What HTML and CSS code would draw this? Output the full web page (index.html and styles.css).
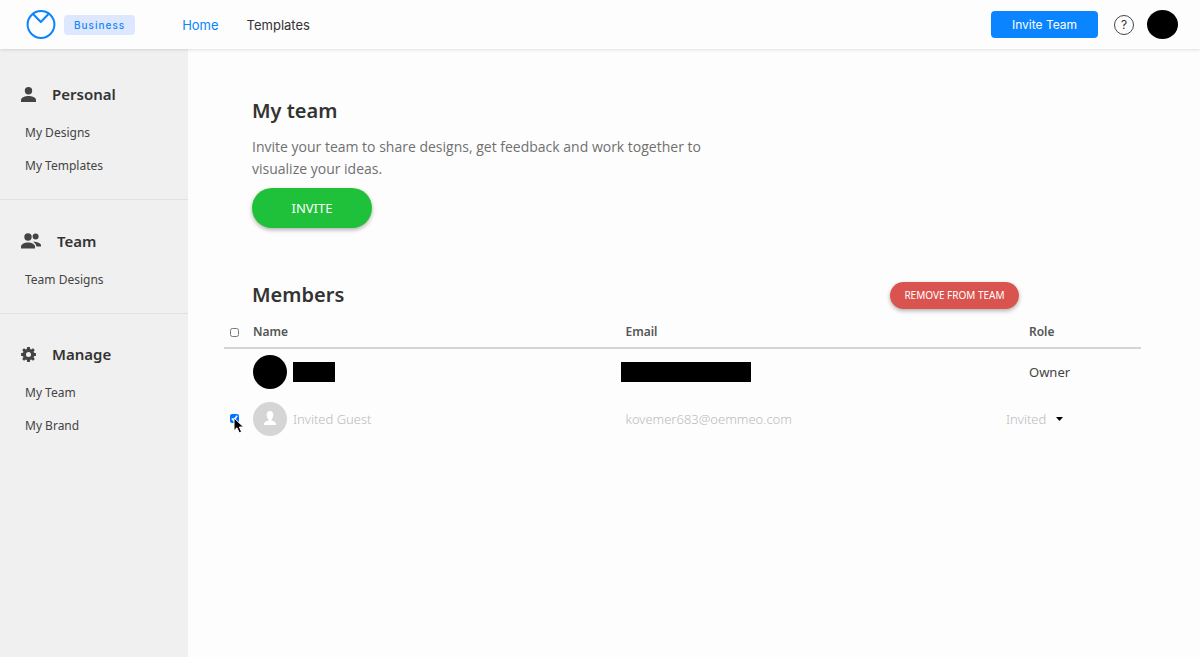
FILE: index.html
```html
<!DOCTYPE html>
<html lang="en">
<head>
	<meta charset="UTF-8">
	<title>My team</title>
	<link rel="stylesheet" href="styles.css">
</head>
<body>
	<header class="topbar">
		<a href="#" class="logo" aria-label="Home page">
			<svg width="30" height="30" viewBox="0 0 30 30" fill="none" stroke="#0a84ff" stroke-width="2" stroke-linejoin="round">
				<circle cx="15" cy="14.500" r="13.4"/>
				<path d="M7 4L14.800 12L22.500 4"/>
			</svg>
		</a>
		<span class="plan">Business</span>
		<nav class="nav">
			<a href="#" class="active">Home</a>
			<a href="#">Templates</a>
		</nav>
		<button type="button" class="btn-team">Invite Team</button>
		<button type="button" class="help" aria-label="Help">?</button>
		<button type="button" class="account" aria-label="Account"></button>
	</header>
	<div class="page">
		<aside class="sidebar">
			<section>
				<h2>
					<svg width="15" height="15" viewBox="0 0 15 15"><circle cx="7.5" cy="3.7" r="3.7"/><path d="M0 15V13C0 10.300 4.500 9 7.500 9S15 10.300 15 13V15Z"/></svg>
					Personal
				</h2>
				<ul>
					<li><a href="#">My Designs</a></li>
					<li><a href="#">My Templates</a></li>
				</ul>
			</section>
			<section>
				<h2>
					<svg width="20" height="16" viewBox="0 0 20 16"><circle cx="7" cy="4" r="3.700"/><circle cx="14.600" cy="3.600" r="3"/><path d="M0 15.500V13.500C0 11 4 9.500 7 9.500S14 11 14 13.500V15.500Z"/><path d="M12 8.700C15.500 8.600 20 10 20 12.300V13.500H15.400C15.200 11.300 14 9.800 12 8.700Z"/></svg>
					Team
				</h2>
				<ul>
					<li><a href="#">Team Designs</a></li>
				</ul>
			</section>
			<section>
				<h2>
					<svg width="15" height="15" viewBox="0 0 16 16"><path fill-rule="evenodd" d="M6.600 0H9.400L9.800 2.200L11 2.700L12.800 1.300L14.700 3.200L13.400 5L13.900 6.200L16 6.600V9.400L13.900 9.800L13.400 11L14.700 12.800L12.800 14.700L11 13.400L9.800 13.900L9.400 16H6.600L6.200 13.900L5 13.400L3.200 14.700L1.300 12.800L2.600 11L2.100 9.800L0 9.400V6.600L2.100 6.200L2.600 5L1.300 3.200L3.200 1.300L5 2.600L6.200 2.100ZM8 5.300A2.700 2.700 0 1 0 8 10.700A2.700 2.700 0 1 0 8 5.300Z"/></svg>
					Manage
				</h2>
				<ul>
					<li><a href="#">My Team</a></li>
					<li><a href="#">My Brand</a></li>
				</ul>
			</section>
		</aside>
		<main class="content">
			<section class="intro">
				<h1>My team</h1>
				<p>Invite your team to share designs, get feedback and work together to visualize your ideas.</p>
				<button type="button" class="btn-invite">INVITE</button>
			</section>
			<div class="members-head">
				<h1>Members</h1>
				<button type="button" class="btn-remove">REMOVE FROM TEAM</button>
			</div>
			<table class="members">
				<thead>
					<tr>
						<th class="col-check"><input type="checkbox" aria-label="Select all members"></th>
						<th>Name</th>
						<th class="col-email">Email</th>
						<th class="col-role">Role</th>
					</tr>
				</thead>
				<tbody>
					<tr>
						<td></td>
						<td><div class="person"><span class="avatar dark"></span><span class="mask mask-name"></span></div></td>
						<td><span class="mask mask-email"></span></td>
						<td class="col-role">Owner</td>
					</tr>
					<tr class="invited">
						<td class="check">
							<input type="checkbox" aria-label="Select Invited Guest" checked>
							<svg class="cursor" width="12" height="18" viewBox="0 0 12 18"><path d="M1 1V13.500L4 10.800L6.200 15.800L8.600 14.800L6.400 10H10.600Z" fill="#000" stroke="#fff"/></svg>
						</td>
						<td>
							<div class="person">
								<span class="avatar"><svg width="14" height="15" viewBox="0 0 14 15" fill="#fff"><path d="M7 0C9.300 0 10.400 1.700 10.300 4C10.200 6 9.500 7.300 8.600 8.200V9.500C10.800 10.200 13 11 13 13V14H1V13C1 11 3.200 10.200 5.400 9.500V8.200C4.500 7.300 3.800 6 3.700 4C3.600 1.700 4.700 0 7 0Z"/></svg></span>
								Invited Guest
							</div>
						</td>
						<td>kovemer683@oemmeo.com</td>
						<td>
							<div class="role-select">
								<select aria-label="Role of Invited Guest"><option>Invited</option></select>
								<svg width="7" height="4" viewBox="0 0 7 4"><path d="M0 0H7L3.500 4Z"/></svg>
							</div>
						</td>
					</tr>
				</tbody>
			</table>
		</main>
	</div>
</body>
</html>
```
FILE: styles.css
```css
*{box-sizing: border-box;}
body,h1,h2,p,ul{margin: 0;padding: 0;}
body{display: flex;flex-direction: column;min-height: 100vh;font: 13px/22px "Noto Sans","Open Sans",sans-serif;color: #444;background: #fdfdfd;}
ul{list-style: none;}
a{color: inherit;text-decoration: none;}
button{border: 0;padding: 0;cursor: pointer;font-family: inherit;}

/* top bar */
.topbar{display: flex;align-items: center;height: 49px;padding: 0 22px 0 26px;background: #fdfdfd;box-shadow: 0 1px 3px rgba(0,0,0,.12);position: relative;font-family: Inter,sans-serif;}
.logo{display: flex;}
.plan{margin-left: 8px;padding: 0 10px;height: 20px;border-radius: 4px;background: #dde8ff;color: #1684fa;font-size: 10px;line-height: 20px;font-weight: 500;letter-spacing: 1px;}
.nav{display: flex;gap: 28px;margin-left: 47px;font-size: 13px;color: #333;}
.nav .active{color: #0a84ff;}
.btn-team{width: 107px;height: 27px;margin-left: auto;border-radius: 4px;background: #0a84ff;color: #fff;font-size: 12px;}
.help{width: 20px;height: 20px;margin: 0 13px 0 16px;border: 1px solid #444;border-radius: 50%;background: none;color: #333;font-size: 12px;line-height: 18px;}
.account{width: 31px;height: 29px;border-radius: 50%;background: #000;}

/* side menu */
.page{display: flex;flex: 1;}
.sidebar{flex: none;width: 188px;background: #f0f0f0;}
.sidebar section{padding: 25px 21px 17px;border-bottom: 1px solid #e2e2e2;}
.sidebar section:first-child{padding-top: 29px;}
.sidebar section:last-child{padding-top: 24px;border-bottom: 0;}
.sidebar h2{display: flex;align-items: center;gap: 16px;height: 32px;margin-bottom: 6px;font-size: 15px;font-weight: 600;color: #333;}
.sidebar svg{fill: #444;}
.sidebar li{padding-left: 4px;font-size: 12px;line-height: 33px;}

/* main column */
.content{flex: 1;padding: 47px 59px 40px 36px;}
.intro{padding-left: 28px;}
h1{font-size: 20px;line-height: 30px;font-weight: 600;color: #333;}
.intro p{max-width: 480px;margin: 10px 0 8px;font-family: "Open Sans",sans-serif;font-size: 14px;color: #707070;}
.btn-invite{display: block;width: 120px;height: 40px;border-radius: 20px;background: #1fc13a;color: #fff;font-size: 13px;box-shadow: 0 2px 4px rgba(0,0,0,.3);}
.members-head{display: flex;align-items: center;justify-content: space-between;margin-top: 52px;padding: 0 122px 0 28px;}
.btn-remove{width: 129px;height: 27px;border-radius: 14px;background: #d9534f;color: #fff;font-size: 10px;box-shadow: 0 2px 4px rgba(0,0,0,.3);}

.members{width: 100%;margin-top: 5px;table-layout: fixed;border-collapse: collapse;}
.members th,.members td{padding: 0;text-align: left;}
.members th{height: 33px;padding-top: 2px;border-bottom: 2px solid #d4d4d4;font-size: 12px;font-weight: 600;color: #555;}
.members td{height: 47px;}
.members .col-check{width: 29px;}
.members .col-email{width: 41.5%;}
.members .col-role{width: 135px;padding-left: 23px;}
.members input{display: block;width: 9px;height: 9px;margin: 0 0 0 6px;}
.person{display: flex;align-items: center;gap: 6px;}
.avatar{display: flex;align-items: center;justify-content: center;width: 34px;height: 34px;border-radius: 50%;background: #d5d5d5;}
.dark,.mask{background: #000;}
.mask{display: block;height: 20px;}
.mask-name{width: 42px;}
.mask-email{width: 130px;margin-left: -4px;}
.invited{font-weight: 300;color: #bbb;}
.check{position: relative;}
.cursor{position: absolute;left: 9px;top: 22px;}
.role-select{display: flex;align-items: center;gap: 9px;}
.role-select select{appearance: none;border: 0;padding: 0;background: none;font: inherit;color: inherit;}
```
